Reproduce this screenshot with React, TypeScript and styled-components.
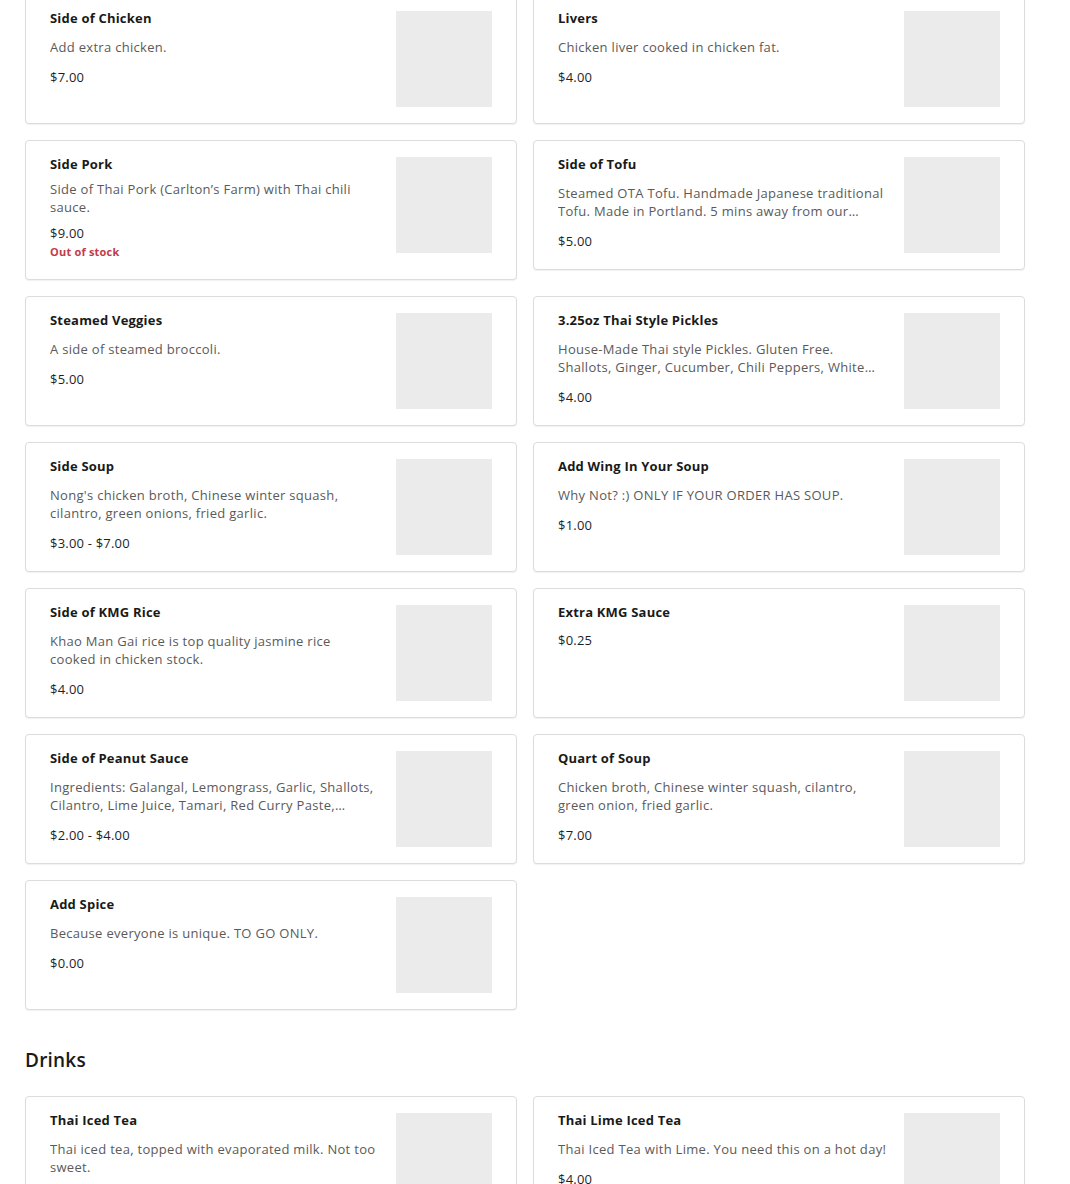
import React from "react";
import styled, { createGlobalStyle } from "styled-components";

const GlobalStyle = createGlobalStyle`
  html, body { margin: 0; padding: 0; background: #fff; }
  body { font-family: "Open Sans", "Liberation Sans", sans-serif; color: #222; }
  * { box-sizing: border-box; }
`;

const Page = styled.div`
  width: 1050px;
  padding: 0 25px 40px 25px;
  margin-top: -6px;
`;

const Section = styled.section`
  margin-bottom: 36px;
`;

const SectionTitle = styled.h2`
  margin: 0 0 22px 0;
  font-size: 19px;
  line-height: 28px;
  font-weight: 600;
  color: #1a1a1a;
  letter-spacing: 0.2px;
`;

const Grid = styled.div`
  display: grid;
  grid-template-columns: 492px 492px;
  column-gap: 16px;
  row-gap: 16px;
  align-items: start;
`;

const Card = styled.div`
  display: flex;
  gap: 16px;
  border: 1px solid #dcdcdc;
  border-radius: 4px;
  box-shadow: 0 1px 1px rgba(0, 0, 0, 0.06);
  padding: 16px 24px;
  min-height: 130px;
  background: #fff;
`;

const Info = styled.div`
  flex: 1;
  min-width: 0;
  display: flex;
  flex-direction: column;
`;

const Name = styled.div`
  font-size: 13px;
  line-height: 14px;
  font-weight: 700;
  color: #1a1a1a;
  letter-spacing: 0.2px;
`;

const Desc = styled.div<{ $tight?: boolean }>`
  margin-top: ${(p) => (p.$tight ? "9px" : "13px")};
  font-size: 13px;
  line-height: 18px;
  letter-spacing: 0.3px;
  color: #5a5a5a;
  display: -webkit-box;
  -webkit-line-clamp: 2;
  -webkit-box-orient: vertical;
  overflow: hidden;
`;

const Price = styled.div<{ $tight?: boolean }>`
  margin-top: ${(p) => (p.$tight ? "8px" : "12px")};
  font-size: 13px;
  line-height: 18px;
  letter-spacing: 0.2px;
  color: #1f1f1f;
`;

const Stock = styled.div`
  margin: 2px 0 3px 0;
  font-size: 11px;
  line-height: 16px;
  font-weight: 700;
  letter-spacing: 0.2px;
  color: #c23b4a;
`;

const Thumb = styled.div`
  width: 96px;
  height: 96px;
  flex: none;
  background: #ebebeb;
`;

type Item = { name: string; desc?: string; price: string; out?: boolean };

const sides: Item[] = [
  { name: "Side of Chicken", desc: "Add extra chicken.", price: "$7.00" },
  { name: "Livers", desc: "Chicken liver cooked in chicken fat.", price: "$4.00" },
  {
    name: "Side Pork",
    desc: "Side of Thai Pork (Carlton\u2019s Farm) with Thai chili sauce.",
    price: "$9.00",
    out: true,
  },
  {
    name: "Side of Tofu",
    desc:
      "Steamed OTA Tofu. Handmade Japanese traditional Tofu. Made in Portland. 5 mins away from our store. Organic non-GMO soy beans.",
    price: "$5.00",
  },
  { name: "Steamed Veggies", desc: "A side of steamed broccoli.", price: "$5.00" },
  {
    name: "3.25oz Thai Style Pickles",
    desc:
      "House-Made Thai style Pickles. Gluten Free. Shallots, Ginger, Cucumber, Chili Peppers, White Vinegar, Sugar, Salt.",
    price: "$4.00",
  },
  {
    name: "Side Soup",
    desc: "Nong's chicken broth, Chinese winter squash, cilantro, green onions, fried garlic.",
    price: "$3.00 - $7.00",
  },
  { name: "Add Wing In Your Soup", desc: "Why Not? :) ONLY IF YOUR ORDER HAS SOUP.", price: "$1.00" },
  {
    name: "Side of KMG Rice",
    desc: "Khao Man Gai rice is top quality jasmine rice cooked in chicken stock.",
    price: "$4.00",
  },
  { name: "Extra KMG Sauce", price: "$0.25" },
  {
    name: "Side of Peanut Sauce",
    desc:
      "Ingredients: Galangal, Lemongrass, Garlic, Shallots, Cilantro, Lime Juice, Tamari, Red Curry Paste, Peanuts, Coconut Milk.",
    price: "$2.00 - $4.00",
  },
  {
    name: "Quart of Soup",
    desc: "Chicken broth, Chinese winter squash, cilantro, green onion, fried garlic.",
    price: "$7.00",
  },
  { name: "Add Spice", desc: "Because everyone is unique. TO GO ONLY.", price: "$0.00" },
];

const drinks: Item[] = [
  { name: "Thai Iced Tea", desc: "Thai iced tea, topped with evaporated milk. Not too sweet.", price: "$4.00" },
  { name: "Thai Lime Iced Tea", desc: "Thai Iced Tea with Lime. You need this on a hot day!", price: "$4.00" },
];

function MenuCard({ item }: { item: Item }) {
  return (
    <Card>
      <Info>
        <Name>{item.name}</Name>
        {item.desc && <Desc $tight={item.out}>{item.desc}</Desc>}
        <Price $tight={item.out}>{item.price}</Price>
        {item.out && <Stock>Out of stock</Stock>}
      </Info>
      <Thumb />
    </Card>
  );
}

export default function App() {
  return (
    <Page>
      <GlobalStyle />
      <Section>
        <Grid>
          {sides.map((it) => (
            <MenuCard key={it.name} item={it} />
          ))}
        </Grid>
      </Section>
      <Section>
        <SectionTitle>Drinks</SectionTitle>
        <Grid>
          {drinks.map((it) => (
            <MenuCard key={it.name} item={it} />
          ))}
        </Grid>
      </Section>
    </Page>
  );
}
